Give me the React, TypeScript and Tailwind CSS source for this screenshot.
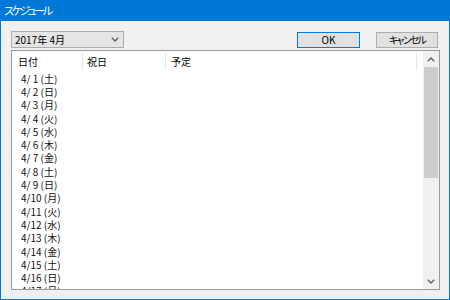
import React from 'react';

const days = ['日', '月', '火', '水', '木', '金', '土'];

// April 2017 starts on Saturday; only the rows that fit are shown
const rows = Array.from({ length: 17 }, (_, i) => {
  const d = i + 1;
  const w = days[(6 + i) % 7];
  return `4/${d < 10 ? ' ' + d : d} (${w})`;
});

function Chevron({ up = false, className = '' }: { up?: boolean; className?: string }) {
  return (
    <svg width="8" height="5" viewBox="0 0 8 5" className={className}>
      <path
        d={up ? 'M0.8 4.2 L4 1 L7.2 4.2' : 'M0.8 0.8 L4 4 L7.2 0.8'}
        fill="none"
        stroke="currentColor"
        strokeWidth="1.4"
      />
    </svg>
  );
}

export default function App() {
  return (
    <div
      className="w-[450px] h-[300px] flex flex-col bg-[#f0f0f0] text-black"
      style={{ fontFamily: '"Noto Sans CJK JP", "Noto Sans", sans-serif' }}
    >
      {/* ── Title bar ── */}
      <div className="h-[21px] shrink-0 bg-[#0078d7] flex items-center pl-[4px]">
        <span className="text-[11px] leading-none text-white [font-feature-settings:'palt'] tracking-[-2.3px]">スケジュール</span>
      </div>

      {/* ── Body ── */}
      <div className="flex-1 flex flex-col border-x border-b border-[#0078d7] pl-[10px]">
        {/* Toolbar */}
        <div className="flex items-start mt-[10px]">
          <div className="w-[113px] h-[17px] bg-[#e5e5e5] border border-[#adadad] flex items-center pl-[3px] pr-[4px]">
            <span className="flex-1 text-[10px] leading-none">2017年 4月</span>
            <Chevron className="text-[#606060]" />
          </div>
          <button className="ml-[173px] mt-[1px] w-[63px] h-[16px] bg-[#e1e1e1] border border-[#0078d7] text-[10px] leading-none flex items-center justify-center">
            OK
          </button>
          <button className="ml-[16px] mt-[1px] w-[62px] h-[16px] bg-[#e1e1e1] border border-[#adadad] text-[10px] leading-none flex items-center justify-center [font-feature-settings:'palt'] tracking-[-1.8px]">
            キャンセル
          </button>
        </div>

        {/* List view */}
        <div className="mt-[2px] w-[429px] h-[240px] border border-[#9a9a9a] bg-white flex overflow-hidden">
          <div className="flex-1 flex flex-col min-w-0 overflow-hidden">
            {/* Header */}
            <div className="h-[21px] shrink-0 flex text-[10px]">
              <div className="w-[71px] pl-[6px] flex items-center border-r border-[#e5e5e5] my-[2px]">日付</div>
              <div className="w-[83px] pl-[4px] flex items-center border-r border-[#e5e5e5] my-[2px]">祝日</div>
              <div className="w-[251px] pl-[5px] flex items-center border-r border-[#e5e5e5] my-[2px]">予定</div>
            </div>
            {/* Rows */}
            <div className="flex flex-col">
              {rows.map((r, i) => (
                <div key={i} className="h-[13.3px] shrink-0 pl-[9px] flex items-center text-[10px] leading-none text-[#111] whitespace-pre">
                  {r}
                </div>
              ))}
            </div>
          </div>

          {/* Scrollbar */}
          <div className="w-[16px] shrink-0 bg-[#f0f0f0] flex flex-col">
            <div className="h-[16px] flex items-center justify-center text-[#606060]">
              <Chevron up />
            </div>
            <div className="h-[111px] mx-[1px] bg-[#cdcdcd]" />
            <div className="flex-1" />
            <div className="h-[16px] flex items-center justify-center text-[#606060]">
              <Chevron />
            </div>
          </div>
        </div>
      </div>
    </div>
  );
}
